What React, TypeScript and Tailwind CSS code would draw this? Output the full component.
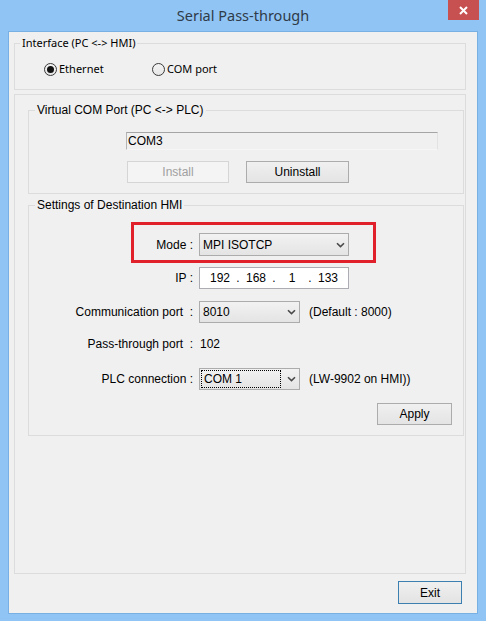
/**
 * SerialPassThrough — Windows 8 style dialog.
 */

import clsx from "clsx";

const body = "font-['Liberation_Sans',Arial,sans-serif] text-[12px] text-black";

function Chevron() {
  return (
    <svg width="9" height="6" viewBox="0 0 9 6" className="shrink-0">
      <path d="M1 1.2 L4.5 4.6 L8 1.2" fill="none" stroke="#4a4a4a" strokeWidth="1.6" />
    </svg>
  );
}

function Combo({ value, width, height = 22, focused }: { value: string; width: number; height?: number; focused?: boolean }) {
  return (
    <div
      className="flex shrink-0 items-center border border-[#acacac] bg-gradient-to-b from-[#f2f2f2] to-[#e4e4e4] pr-[3px]"
      style={{ width, height }}
    >
      {focused ? (
        <div className="ml-[1px] h-[18px] w-[80px] border border-dotted border-black pl-[2px] leading-[16px]">{value}</div>
      ) : (
        <span className="pl-[3px] leading-[14px]">{value}</span>
      )}
      <span className="ml-auto">
        <Chevron />
      </span>
    </div>
  );
}

function Button({ label, width, height = 22, disabled, primary }: { label: string; width: number; height?: number; disabled?: boolean; primary?: boolean }) {
  return (
    <div
      className={clsx(
        "flex shrink-0 items-center justify-center border",
        disabled
          ? "border-[#d5d5d5] bg-[#f4f4f4] text-[#a0a0a0]"
          : primary
            ? "border-[#3c7fb1] bg-gradient-to-b from-[#f0f0f0] to-[#e3e3e3]"
            : "border-[#acacac] bg-gradient-to-b from-[#f0f0f0] to-[#e4e4e4]",
      )}
      style={{ width, height }}
    >
      {label}
    </div>
  );
}

function Radio({ checked, label }: { checked?: boolean; label: string }) {
  return (
    <div className="flex items-center gap-[2px]">
      <span className="flex h-[13px] w-[13px] items-center justify-center rounded-full border border-[#3a3a3a] bg-gradient-to-b from-[#f4f4f4] to-[#e6e6e6]">
        {checked && <span className="h-[7px] w-[7px] rounded-full bg-[#111]" />}
      </span>
      <span>{label}</span>
    </div>
  );
}

function Row({ label, children, className }: { label: string; children: React.ReactNode; className?: string }) {
  return (
    <div className={clsx("flex items-center", className)}>
      <span className="w-[164px] shrink-0 whitespace-pre text-right">{label}</span>
      <div className="ml-[6px] flex items-center">{children}</div>
    </div>
  );
}

export default function App() {
  return (
    <div className="flex h-[621px] w-[486px] flex-col overflow-hidden bg-[#8fc4f5]">
      {/* Title bar */}
      <div className="grid h-[31px] shrink-0 grid-cols-[1fr_auto_1fr]">
        <div />
        <div className="pt-[5px] font-['Noto_Sans','Open_Sans',sans-serif] text-[14.5px] leading-[20px] text-[#2f3b48]">
          Serial Pass-through
        </div>
        <div className="flex justify-end pr-[7px]">
          <div className="flex h-[20px] w-[31px] items-center justify-center bg-[#c75050]">
            <svg width="9" height="9" viewBox="0 0 9 9">
              <path d="M1 1 L8 8 M8 1 L1 8" stroke="#fff" strokeWidth="2" />
            </svg>
          </div>
        </div>
      </div>

      {/* Client area */}
      <div className={clsx("mx-[8px] flex h-[583px] flex-col border border-[#79b0e4] bg-[#f0f0f0]", body)}>
        {/* Interface group */}
        <fieldset className="m-0 mt-[4px] ml-[5px] w-[452px] min-w-0 border border-[#dcdcdc] p-0 pb-[13px] font-['Noto_Sans','Open_Sans',sans-serif] text-[11px]">
          <legend className="ml-[5px] px-[2px] leading-[14px]">Interface (PC &lt;-&gt; HMI)</legend>
          <div className="mt-[12px] flex h-[14px] items-center leading-[14px]">
            <div className="ml-[29px] w-[108px]">
              <Radio checked label="Ethernet" />
            </div>
            <Radio label="COM port" />
          </div>
        </fieldset>

        {/* Outer group */}
        <div className="mt-[4px] ml-[5px] flex h-[480px] w-[452px] flex-col border border-[#dcdcdc]">
          {/* Virtual COM port */}
          <fieldset className="m-0 mt-[8px] ml-[13px] w-[436px] min-w-0 border border-[#dcdcdc] p-0 pb-[10px]">
            <legend className="ml-[6px] px-[2px] leading-[14px]">Virtual COM Port (PC &lt;-&gt; PLC)</legend>
            <div className="mt-[15px] ml-[97px] flex h-[18px] w-[312px] items-center border border-t-[#a5a5a5] border-l-[#b5b5b5] border-r-[#e2e2e2] border-b-[#f6f6f6] pl-[1px] leading-[14px]">
              COM3
            </div>
            <div className="mt-[11px] ml-[98px] flex gap-[17px]">
              <Button label="Install" width={102} disabled />
              <Button label="Uninstall" width={103} />
            </div>
          </fieldset>

          {/* Destination settings */}
          <fieldset className="m-0 mt-[4px] ml-[13px] flex w-[436px] min-w-0 flex-col border border-[#dcdcdc] p-0 pb-[10px]">
            <legend className="ml-[6px] px-[2px] leading-[14px]">Settings of Destination HMI</legend>

            <Row label="Mode :" className="relative mt-[21px] h-[23px]">
              <Combo value="MPI ISOTCP" width={150} height={23} />
              <div className="pointer-events-none absolute top-[-11px] left-[102px] h-[41px] w-[245px] border-[3px] border-[#e0202b]" />
            </Row>

            <Row label="IP :" className="mt-[11px] h-[22px]">
              <div className="flex h-[22px] w-[150px] items-center border border-[#abadb3] bg-white pl-[5px] leading-[14px]">
                <span className="w-[30px] text-center">192</span>
                <span className="w-[6px] text-center">.</span>
                <span className="w-[30px] text-center">168</span>
                <span className="w-[6px] text-center">.</span>
                <span className="w-[30px] text-center">1</span>
                <span className="w-[6px] text-center">.</span>
                <span className="w-[30px] text-center">133</span>
              </div>
            </Row>

            <Row label="Communication port  :" className="mt-[12px] h-[22px]">
              <Combo value="8010" width={101} />
              <span className="ml-[9px]">(Default : 8000)</span>
            </Row>

            <Row label="Pass-through port  :" className="mt-[10px] h-[22px]">
              <span className="pl-[1px]">102</span>
            </Row>

            <Row label="PLC connection :" className="mt-[13px] h-[22px]">
              <Combo value="COM 1" width={101} focused />
              <span className="ml-[9px]">(LW-9902 on HMI))</span>
            </Row>

            <div className="mt-[13px] mr-[11px] flex justify-end">
              <Button label="Apply" width={75} />
            </div>
          </fieldset>
        </div>

        <div className="mt-[7px] mr-[15px] flex justify-end">
          <Button label="Exit" width={64} height={23} primary />
        </div>
      </div>
    </div>
  );
}
